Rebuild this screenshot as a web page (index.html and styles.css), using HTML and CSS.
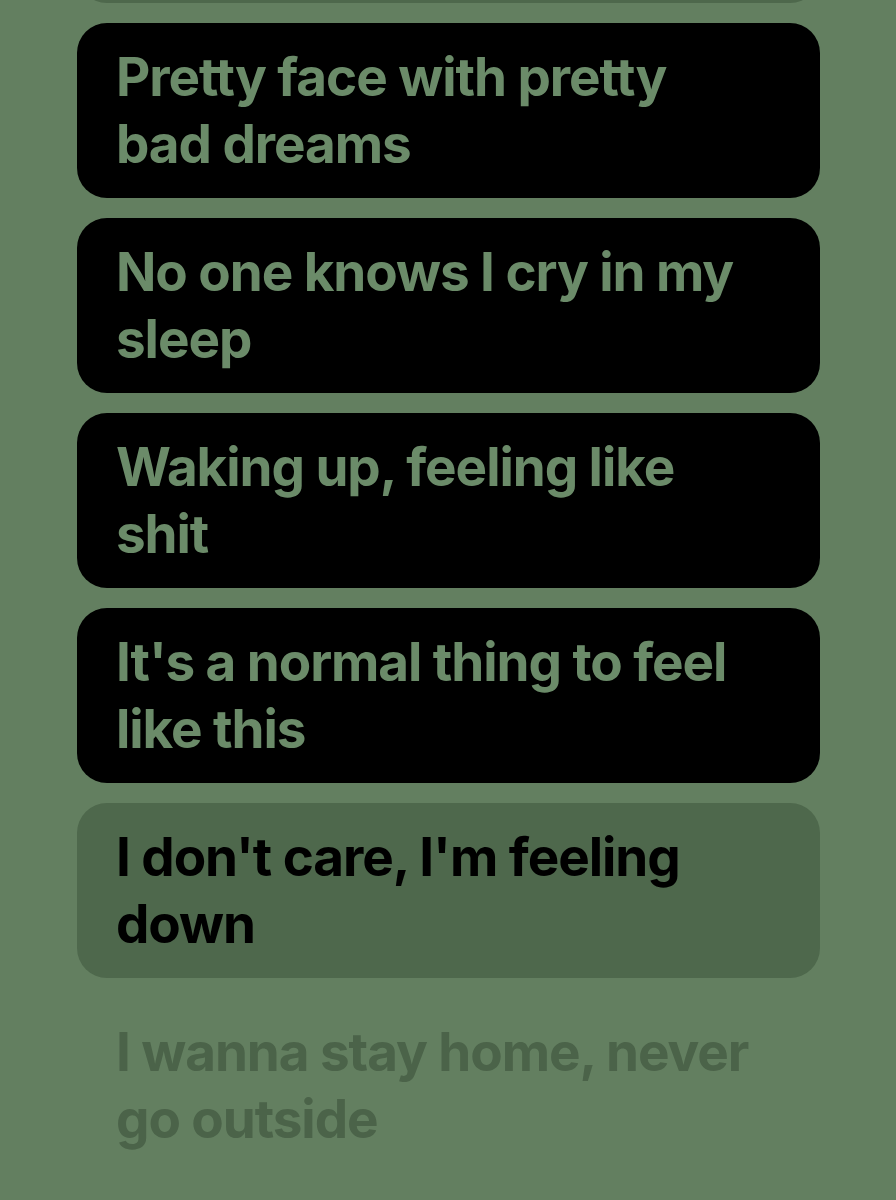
FILE: index.html
```html
<!DOCTYPE html>
<html lang="en">
<head>
  <meta charset="UTF-8">
  <title>Lyrics</title>
  <link rel="stylesheet" href="styles.css">
</head>
<body>

  <!-- Lyric lines -->
  <div class="lyrics">
    <div class="line past"></div>
    <div class="line">Pretty face with pretty bad dreams</div>
    <div class="line">No one knows I cry in my sleep</div>
    <div class="line">Waking up, feeling like shit</div>
    <div class="line">It's a normal thing to feel like this</div>
    <div class="line current">I don't care, I'm feeling down</div>
    <div class="line upcoming">I wanna stay home, never go outside</div>
  </div>

</body>
</html>
```

FILE: styles.css
```css
body {
  margin: 0;
  background-color: #637f60;
  font-family: Inter, "Noto Sans", sans-serif;
  overflow: hidden;
}

.lyrics {
  display: flex;
  flex-direction: column;
  gap: 20px;
  margin: -172px 76px 0 77px;
}

.line {
  height: 175px;
  box-sizing: border-box;
  padding: 21px 70px 0 39px;
  background-color: #000;
  border-radius: 30px;
  color: #6b8b69;
  font-size: 53px;
  font-weight: 700;
  line-height: 67px;
  letter-spacing: -0.02em;
}

.past {
  background-color: #4e684c;
}

.current {
  background-color: #4e684c;
  color: #000;
}

.upcoming {
  background-color: transparent;
  color: #4b6349;
}
```
